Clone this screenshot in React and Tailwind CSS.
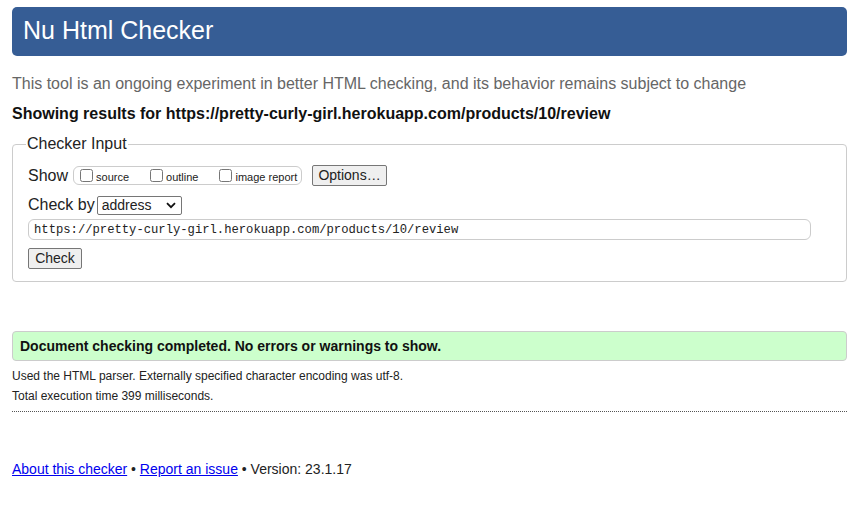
import { useState } from "react";

// Nu Html Checker results page
export default function App() {
  const [url, setUrl] = useState(
    "https://pretty-curly-girl.herokuapp.com/products/10/review"
  );

  return (
    <div className="min-h-[506px] bg-white pl-3 pr-4 pt-[7px] font-['Liberation_Sans',Arial,sans-serif] text-[#222]">
      <h1 className="h-[49px] rounded-[5px] bg-[#365d95] pl-[11px] pt-[7px] text-[25px] leading-[32px] text-white">
        Nu Html Checker
      </h1>

      <p className="mt-[18px] text-[16px] leading-[20px] text-[#666]">
        This tool is an ongoing experiment in better HTML checking, and its
        behavior remains subject to change
      </p>
      <p className="mt-[10px] text-[16px] font-bold leading-[20px] text-[#111]">
        Showing results for {url}
      </p>

      <fieldset className="mt-[10px] h-[148px] rounded-[4px] border border-[#ccc] pl-[15px] pr-[35px]">
        <legend className="ml-[-2px] px-[1px] text-[16px] leading-[20px] text-[#222]">
          Checker Input
        </legend>

        <div className="mt-[11px] flex items-center">
          <span className="text-[16px] leading-[20px]">Show</span>
          <div className="ml-[5px] flex h-[19px] w-[229px] items-center rounded-[6px] border border-[#ccc] pl-[6px]">
            <label className="flex items-center text-[11px]">
              <input type="checkbox" className="m-0 h-[13px] w-[13px]" />
              <span className="ml-[3px] mt-[3px]">source</span>
            </label>
            <label className="ml-[21px] flex items-center text-[11px]">
              <input type="checkbox" className="m-0 h-[13px] w-[13px]" />
              <span className="ml-[3px] mt-[3px]">outline</span>
            </label>
            <label className="ml-[21px] flex items-center text-[11px]">
              <input type="checkbox" className="m-0 h-[13px] w-[13px]" />
              <span className="ml-[3px] mt-[3px]">image report</span>
            </label>
          </div>
          <button className="ml-[10px] h-[21px] w-[75px] rounded-[2px] border border-[#767676] bg-[#efefef] text-[14px] leading-[19px]">
            Options…
          </button>
        </div>

        <div className="mt-[9px] flex items-center">
          <span className="text-[16px] leading-[20px]">Check by</span>
          <div className="ml-[2px] flex h-[19px] w-[85px] items-center justify-between rounded-[2px] border border-[#767676] pl-[4px] pr-[5px] text-[14px]">
            <span>address</span>
            <svg width="10" height="7" viewBox="0 0 10 7">
              <path
                d="M1 1.2 L5 5.2 L9 1.2"
                fill="none"
                stroke="#111"
                strokeWidth="1.8"
              />
            </svg>
          </div>
        </div>

        <input
          value={url}
          onChange={(e) => setUrl(e.target.value)}
          className="mt-[4px] block h-[21px] w-full rounded-[6px] border border-[#ccc] pl-[5px] font-['Liberation_Mono',monospace] text-[12.2px] text-[#222] outline-none"
        />

        <button className="mt-[8px] block h-[21px] w-[54px] rounded-[2px] border border-[#767676] bg-[#efefef] text-[14px] leading-[19px]">
          Check
        </button>
      </fieldset>

      <div className="mt-[49px] flex h-[30px] items-center rounded-[4px] border border-[#ccc] bg-[#ccffcc] pl-[7px] text-[14px] font-bold text-[#111]">
        Document checking completed. No errors or warnings to show.
      </div>

      <p className="mt-[7px] text-[12px] leading-[16px]">
        Used the HTML parser. Externally specified character encoding was
        utf-8.
      </p>
      <p className="mt-[4px] text-[12px] leading-[16px]">
        Total execution time 399 milliseconds.
      </p>
      <div className="mt-[7px] border-t border-dotted border-[#555]" />

      <p className="mt-[48px] text-[14px] leading-[18px] text-[#222]">
        <a href="#" className="text-[#0000ee] underline">
          About this checker
        </a>{" "}
        •{" "}
        <a href="#" className="text-[#0000ee] underline">
          Report an issue
        </a>{" "}
        • Version: 23.1.17
      </p>
    </div>
  );
}
